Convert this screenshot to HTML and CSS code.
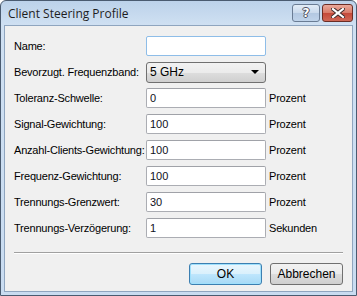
FILE: index.html
```html
<!DOCTYPE html>
<html lang="de">
<head>
    <meta charset="UTF-8">
    <title>Client Steering Profile</title>
    <link rel="stylesheet" href="styles.css">
</head>
<body>

    <div class="window">
        <div class="titlebar">
            <span class="title">Client Steering Profile</span>
            <div class="caption-buttons">
                <span class="cap-btn help">?</span>
                <span class="cap-btn close">
                    <svg width="14" height="10" viewBox="0 0 14 10">
                        <path d="M2 1 L12 9 M12 1 L2 9" stroke="#3a2a2a" stroke-width="4" stroke-linecap="square"/>
                        <path d="M2 1 L12 9 M12 1 L2 9" stroke="#ffffff" stroke-width="2.2" stroke-linecap="square"/>
                    </svg>
                </span>
            </div>
        </div>

        <div class="client">
            <div class="fields">
                <label>Name:</label>
                <input type="text" class="field focus" value="">
                <span></span>

                <label>Bevorzugt. Frequenzband:</label>
                <div class="combo">
                    <span>5 GHz</span>
                    <span class="arrow"></span>
                </div>
                <span></span>

                <label>Toleranz-Schwelle:</label>
                <input type="text" class="field" value="0">
                <span class="unit">Prozent</span>

                <label>Signal-Gewichtung:</label>
                <input type="text" class="field" value="100">
                <span class="unit">Prozent</span>

                <label>Anzahl-Clients-Gewichtung:</label>
                <input type="text" class="field" value="100">
                <span class="unit">Prozent</span>

                <label>Frequenz-Gewichtung:</label>
                <input type="text" class="field" value="100">
                <span class="unit">Prozent</span>

                <label>Trennungs-Grenzwert:</label>
                <input type="text" class="field" value="30">
                <span class="unit">Prozent</span>

                <label>Trennungs-Verzögerung:</label>
                <input type="text" class="field" value="1">
                <span class="unit">Sekunden</span>
            </div>

            <div class="separator"></div>

            <div class="actions">
                <button type="button" class="btn default">OK</button>
                <button type="button" class="btn">Abbrechen</button>
            </div>
        </div>
    </div>

</body>
</html>
```

FILE: styles.css
```css
body {
    margin: 0;
    padding: 0;
    background-color: #ffffff;
    font-family: "Liberation Sans", Arial, sans-serif;
    font-size: 11px;
}
.window {
    width: 357px;
    height: 296px;
    box-sizing: border-box;
    border: 1px solid #4a5b70;
    border-radius: 6px 6px 0 0;
    background: linear-gradient(#bcd2ea, #cfe0f2 24px, #c9dcf1);
    display: flex;
    flex-direction: column;
    padding: 0 3px 3px 3px;
}
.titlebar {
    height: 24px;
    display: flex;
    align-items: center;
    justify-content: space-between;
}
.title {
    font-family: "Open Sans", "Noto Sans", sans-serif;
    font-size: 12px;
    color: #1e1e1e;
    padding-left: 4px;
    padding-top: 1px;
}
.caption-buttons {
    display: flex;
    gap: 2px;
    margin-top: 3px;
    align-self: flex-start;
}
.cap-btn {
    display: flex;
    align-items: center;
    justify-content: center;
    border: 1px solid #6a7c94;
    border-radius: 3px;
    box-sizing: border-box;
    height: 18px;
}
.help {
    width: 28px;
    background: linear-gradient(#e2ecf7, #c9d9ec 50%, #b3c8e1 51%, #bfd3ea);
    color: #ffffff;
    font-family: "DejaVu Sans", sans-serif;
    font-weight: bold;
    font-size: 12px;
    text-shadow: 0 0 1px #334, 1px 0 0 #556, -1px 0 0 #556, 0 1px 0 #556, 0 -1px 0 #556;
}
.close {
    width: 31px;
    border-color: #6b2d25;
    background: linear-gradient(#e9a99b, #d87a68 50%, #c4493a 51%, #d06856);
}
.client {
    flex: 1;
    background-color: #f0f0f0;
    border: 1px solid #8fa5bf;
    display: flex;
    flex-direction: column;
    padding: 10px 9px 0 9px;
}
.fields {
    display: grid;
    grid-template-columns: 132px 120px auto;
    grid-auto-rows: 20px;
    row-gap: 6px;
    align-items: center;
}
.fields label,
.unit {
    color: #000000;
    white-space: nowrap;
    letter-spacing: -0.2px;
}
.field {
    height: 20px;
    width: 120px;
    box-sizing: border-box;
    border: 1px solid #abadb3;
    border-top-color: #a0a2a8;
    border-radius: 2px;
    background: #ffffff;
    padding: 0 0 0 3px;
    margin: 0;
    font-family: "Liberation Sans", Arial, sans-serif;
    font-size: 11px;
    color: #10101c;
    outline: none;
}
.field.focus {
    border-color: #8ebde8;
}
.combo {
    height: 21px;
    box-sizing: border-box;
    border: 1px solid #707070;
    border-radius: 3px;
    background: linear-gradient(#f2f2f2, #ebebeb 50%, #dddddd 51%, #cfcfcf);
    display: flex;
    align-items: center;
    justify-content: space-between;
    padding: 0 6px 0 3px;
    font-size: 12px;
}
.arrow {
    width: 0;
    height: 0;
    border-left: 4px solid transparent;
    border-right: 4px solid transparent;
    border-top: 4px solid #000000;
}
.unit {
    padding-left: 3px;
}
.separator {
    margin: 14px 0 0 0;
    border-top: 1px solid #a0a0a0;
    border-bottom: 1px solid #ffffff;
}
.actions {
    display: flex;
    justify-content: flex-end;
    gap: 8px;
    margin-top: 9px;
}
.btn {
    width: 73px;
    height: 22px;
    border: 1px solid #707070;
    border-radius: 3px;
    background: linear-gradient(#f2f2f2, #ebebeb 50%, #dddddd 51%, #cfcfcf);
    font-family: "Liberation Sans", Arial, sans-serif;
    font-size: 12px;
    color: #000000;
    padding: 0;
}
.btn.default {
    border-color: #3c7fb1;
    background: linear-gradient(#eaf6fd, #d9f0fc 50%, #bee6fd 51%, #a7d9f5);
    box-shadow: inset 0 0 0 1px #9fe0fc;
}
```
